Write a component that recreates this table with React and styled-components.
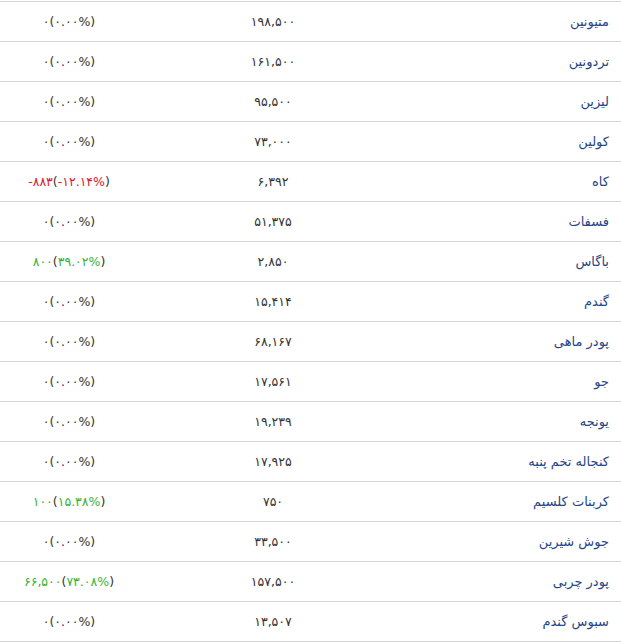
import React from 'react';
import styled, { createGlobalStyle } from 'styled-components';

const GlobalStyle = createGlobalStyle`
  html, body {
    margin: 0;
    padding: 0;
    background: #fff;
  }
  body {
    font-family: 'DejaVu Sans', 'Noto Sans', sans-serif;
  }
`;

const Table = styled.div`
  direction: rtl;
  width: 621px;
  margin-top: 1px;
  border-bottom: 1px solid #d6d6d6;
`;

const Row = styled.div`
  display: grid;
  grid-template-columns: 213px 270px 138px;
  height: 39px;
  border-top: 1px solid #d6d6d6;
  align-items: center;
  font-size: 12.5px;
`;

const Name = styled.div`
  text-align: right;
  padding-right: 12px;
  color: #1f4586;
  font-size: 13px;
`;

const Price = styled.div`
  text-align: center;
  color: #333;
  letter-spacing: 1.2px;
`;

const Change = styled.div`
  direction: ltr;
  text-align: center;
  color: #333;
  letter-spacing: 0.9px;
`;

const Delta = styled.span`
  color: ${(p) => (p.$trend === 'up' ? '#35b335' : p.$trend === 'down' ? '#e0162b' : '#333')};
`;

const rows = [
  { name: 'متیونین', price: '۱۹۸,۵۰۰', diff: '۰', pct: '۰.۰۰%' },
  { name: 'تردونین', price: '۱۶۱,۵۰۰', diff: '۰', pct: '۰.۰۰%' },
  { name: 'لیزین', price: '۹۵,۵۰۰', diff: '۰', pct: '۰.۰۰%' },
  { name: 'کولین', price: '۷۳,۰۰۰', diff: '۰', pct: '۰.۰۰%' },
  { name: 'کاه', price: '۶,۳۹۲', diff: '-۸۸۳', pct: '-۱۲.۱۴%', trend: 'down' },
  { name: 'فسفات', price: '۵۱,۳۷۵', diff: '۰', pct: '۰.۰۰%' },
  { name: 'باگاس', price: '۲,۸۵۰', diff: '۸۰۰', pct: '۳۹.۰۲%', trend: 'up' },
  { name: 'گندم', price: '۱۵,۴۱۴', diff: '۰', pct: '۰.۰۰%' },
  { name: 'پودر ماهی', price: '۶۸,۱۶۷', diff: '۰', pct: '۰.۰۰%' },
  { name: 'جو', price: '۱۷,۵۶۱', diff: '۰', pct: '۰.۰۰%' },
  { name: 'یونجه', price: '۱۹,۲۳۹', diff: '۰', pct: '۰.۰۰%' },
  { name: 'کنجاله تخم پنبه', price: '۱۷,۹۲۵', diff: '۰', pct: '۰.۰۰%' },
  { name: 'کربنات کلسیم', price: '۷۵۰', diff: '۱۰۰', pct: '۱۵.۳۸%', trend: 'up' },
  { name: 'جوش شیرین', price: '۳۳,۵۰۰', diff: '۰', pct: '۰.۰۰%' },
  { name: 'پودر چربی', price: '۱۵۷,۵۰۰', diff: '۶۶,۵۰۰', pct: '۷۳.۰۸%', trend: 'up' },
  { name: 'سبوس گندم', price: '۱۳,۵۰۷', diff: '۰', pct: '۰.۰۰%' },
];

export default function App() {
  return (
    <>
      <GlobalStyle />
      <Table>
        {rows.map((r) => (
          <Row key={r.name}>
            <Name>{r.name}</Name>
            <Price>{r.price}</Price>
            <Change>
              <Delta $trend={r.trend}>{r.diff}</Delta>(<Delta $trend={r.trend}>{r.pct}</Delta>)
            </Change>
          </Row>
        ))}
      </Table>
    </>
  );
}
